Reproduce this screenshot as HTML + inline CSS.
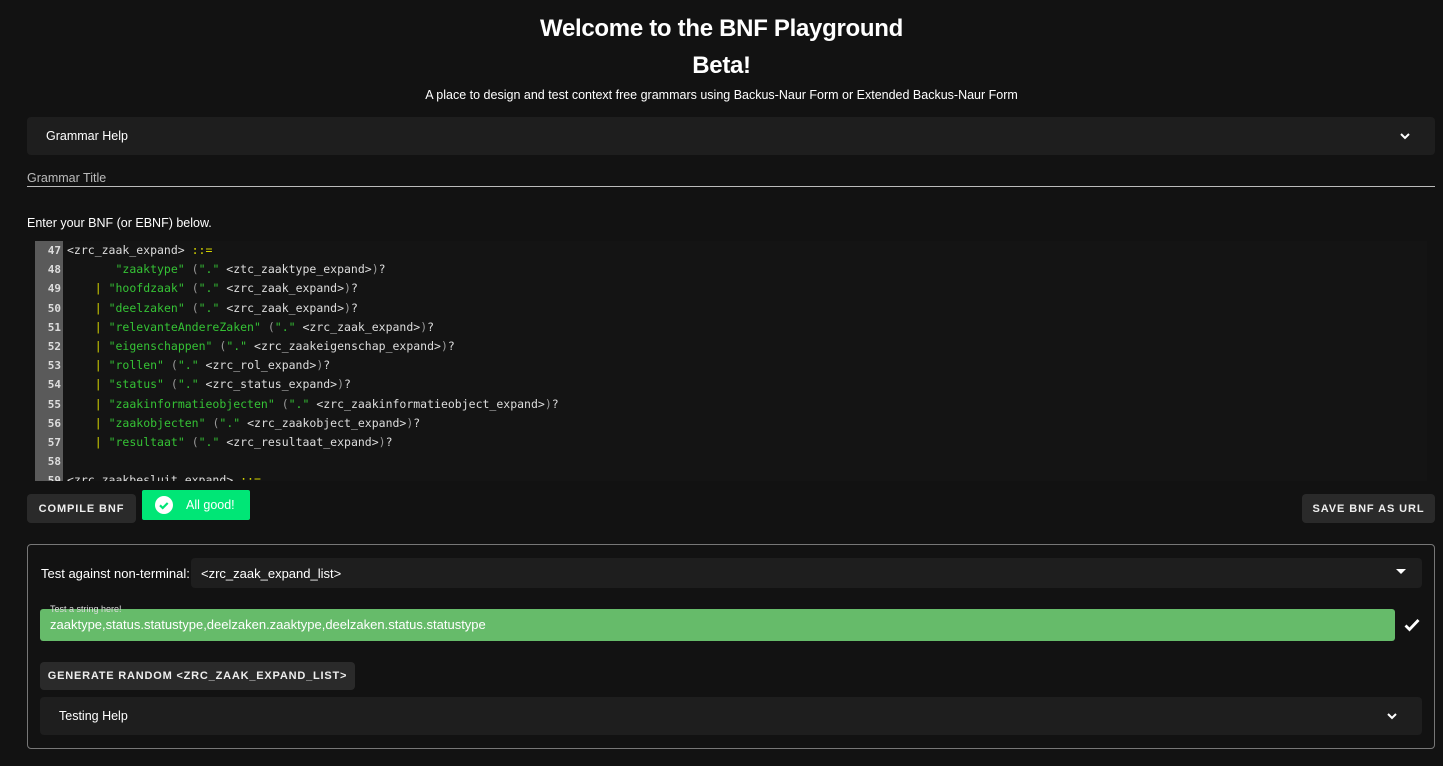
<!DOCTYPE html>
<html><head><meta charset="utf-8"><style>
*{box-sizing:border-box;margin:0;padding:0}
body{width:1443px;height:766px;background:#121212;color:#fff;font-family:"Liberation Sans",sans-serif;position:relative;overflow:hidden}
.abs{position:absolute}
h1{position:absolute;left:0;width:1443px;text-align:center;font-size:24px;font-weight:bold;letter-spacing:-0.3px}
.card{background:#1e1e1e;border-radius:4px;position:absolute}
.btn{position:absolute;background:#2a2a2a;border-radius:4px;font-size:11px;font-weight:bold;letter-spacing:0.9px;color:#eee;display:flex;align-items:center;justify-content:center;white-space:nowrap}
.code{position:absolute;left:35px;top:241px;width:1392px;height:240px;background:#141414;overflow:hidden}
.gut{position:absolute;left:0;top:0;width:28px;height:240px;background:#5a5a5a}
.ln{font-family:"DejaVu Sans Mono","Liberation Mono",monospace;font-size:11.5px;line-height:19.2px;white-space:pre;position:absolute;top:0px}
.nums{left:0;width:26px;text-align:right;color:#ddd;font-weight:bold;font-size:11px}
.txt{left:32px;color:#ddd}
.s{color:#35c235}.p{color:#999}.y{color:#d4d400}
</style></head><body>
<h1 style="top:15px">Welcome to the BNF Playground</h1>
<h1 style="top:52px">Beta!</h1>
<div class="abs" style="top:88px;width:1443px;text-align:center;font-size:12.5px">A place to design and test context free grammars using Backus-Naur Form or Extended Backus-Naur Form</div>
<div class="card" style="left:27px;top:117px;width:1408px;height:38px"><span class="abs" style="left:19px;top:12px;font-size:12.5px">Grammar Help</span>
<svg class="abs" style="left:1372px;top:13px" width="12" height="12" viewBox="0 0 12 12"><path d="M2 4l4 4 4-4" stroke="#fff" stroke-width="2" fill="none"/></svg></div>
<div class="abs" style="left:27px;top:171px;font-size:12.5px;color:#bbb">Grammar Title</div>
<div class="abs" style="left:27px;top:186px;width:1408px;height:1px;background:#bbb"></div>
<div class="abs" style="left:27px;top:216px;font-size:12.5px">Enter your BNF (or EBNF) below.</div>
<div class="code"><div class="gut"></div>
<div class="ln nums">47
48
49
50
51
52
53
54
55
56
57
58
59</div>
<div class="ln txt">&lt;zrc_zaak_expand&gt; <span class="y">::=</span>
       <span class="s">"zaaktype"</span> <span class="p">(</span><span class="s">"."</span> &lt;ztc_zaaktype_expand&gt;<span class="p">)</span>?
    <span class="y">|</span> <span class="s">"hoofdzaak"</span> <span class="p">(</span><span class="s">"."</span> &lt;zrc_zaak_expand&gt;<span class="p">)</span>?
    <span class="y">|</span> <span class="s">"deelzaken"</span> <span class="p">(</span><span class="s">"."</span> &lt;zrc_zaak_expand&gt;<span class="p">)</span>?
    <span class="y">|</span> <span class="s">"relevanteAndereZaken"</span> <span class="p">(</span><span class="s">"."</span> &lt;zrc_zaak_expand&gt;<span class="p">)</span>?
    <span class="y">|</span> <span class="s">"eigenschappen"</span> <span class="p">(</span><span class="s">"."</span> &lt;zrc_zaakeigenschap_expand&gt;<span class="p">)</span>?
    <span class="y">|</span> <span class="s">"rollen"</span> <span class="p">(</span><span class="s">"."</span> &lt;zrc_rol_expand&gt;<span class="p">)</span>?
    <span class="y">|</span> <span class="s">"status"</span> <span class="p">(</span><span class="s">"."</span> &lt;zrc_status_expand&gt;<span class="p">)</span>?
    <span class="y">|</span> <span class="s">"zaakinformatieobjecten"</span> <span class="p">(</span><span class="s">"."</span> &lt;zrc_zaakinformatieobject_expand&gt;<span class="p">)</span>?
    <span class="y">|</span> <span class="s">"zaakobjecten"</span> <span class="p">(</span><span class="s">"."</span> &lt;zrc_zaakobject_expand&gt;<span class="p">)</span>?
    <span class="y">|</span> <span class="s">"resultaat"</span> <span class="p">(</span><span class="s">"."</span> &lt;zrc_resultaat_expand&gt;<span class="p">)</span>?

&lt;zrc_zaakbesluit_expand&gt; <span class="y">::=</span></div>
</div>
<div class="btn" style="left:27px;top:494px;width:109px;height:29px">COMPILE BNF</div>
<div class="abs" style="left:142px;top:490px;width:108px;height:30px;background:#00e676;border-radius:2px;font-size:12.5px;display:flex;align-items:center">
<svg style="margin-left:13px" width="18" height="18" viewBox="0 0 18 18"><circle cx="9" cy="9" r="9" fill="#fff"/><path d="M5 9.3l2.7 2.7 5-5" stroke="#00e676" stroke-width="2.2" fill="none"/></svg><span style="margin-left:13px">All good!</span></div>
<div class="btn" style="left:1302px;top:494px;width:133px;height:29px">SAVE BNF AS URL</div>
<div class="abs" style="left:27px;top:544px;width:1408px;height:205px;border:1px solid #777;border-radius:4px"></div>
<div class="abs" style="left:41px;top:566px;font-size:13px">Test against non-terminal:</div>
<div class="card" style="left:191px;top:558px;width:1231px;height:30px"><span class="abs" style="left:10px;top:8px;font-size:13px">&lt;zrc_zaak_expand_list&gt;</span>
<svg class="abs" style="left:1205px;top:11px" width="10" height="6"><path d="M0 0h10L5 5z" fill="#fff"/></svg></div>
<div class="abs" style="left:40px;top:609px;width:1355px;height:32px;background:#66bb6a;border-radius:3px"><span class="abs" style="left:10px;top:8px;font-size:13px">zaaktype,status.statustype,deelzaken.zaaktype,deelzaken.status.statustype</span></div>
<div class="abs" style="left:50px;top:604px;font-size:9px;color:#ddd">Test a string here!</div>
<svg class="abs" style="left:1404px;top:618px" width="16" height="14" viewBox="0 0 16 14"><path d="M1.5 7.5l4 4 9-9.5" stroke="#fff" stroke-width="2.8" fill="none"/></svg>
<div class="btn" style="left:40px;top:662px;width:315px;height:28px;letter-spacing:0.8px">GENERATE RANDOM &lt;ZRC_ZAAK_EXPAND_LIST&gt;</div>
<div class="card" style="left:40px;top:697px;width:1382px;height:38px"><span class="abs" style="left:19px;top:12px;font-size:12.5px">Testing Help</span>
<svg class="abs" style="left:1346px;top:13px" width="12" height="12" viewBox="0 0 12 12"><path d="M2 4l4 4 4-4" stroke="#fff" stroke-width="2" fill="none"/></svg></div>
</body></html>
